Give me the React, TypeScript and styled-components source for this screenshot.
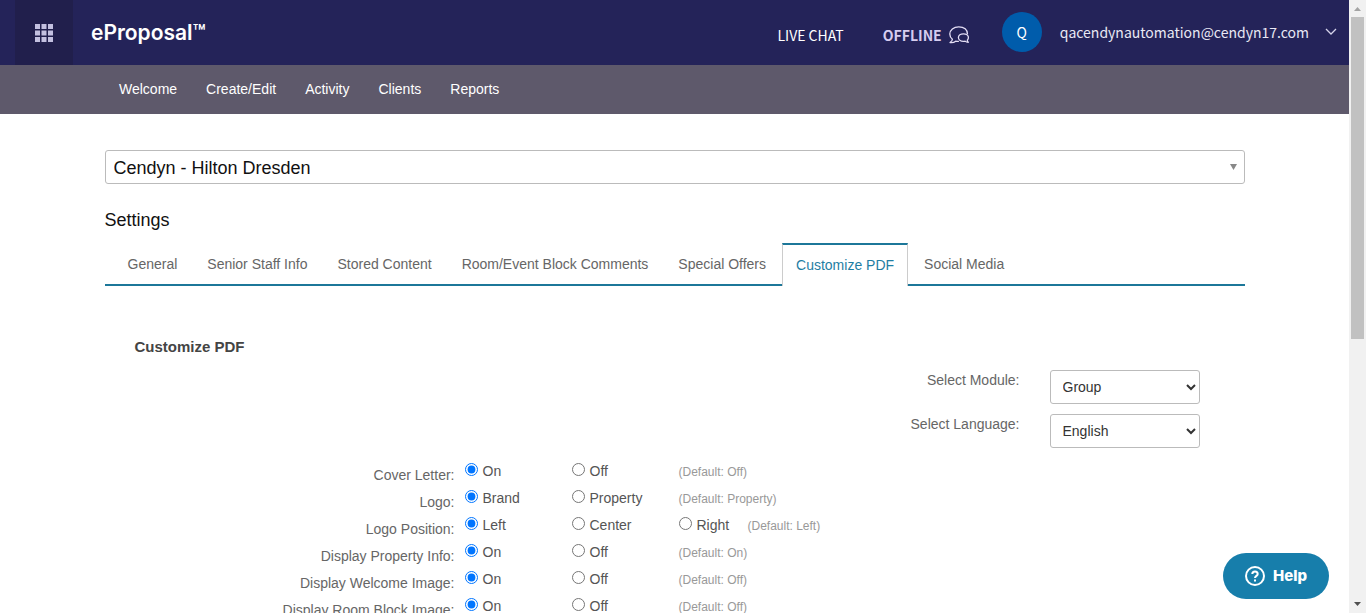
import React, { useId } from "react";
import styled, { createGlobalStyle, css } from "styled-components";

const GlobalStyle = createGlobalStyle`
  *, *::before, *::after { box-sizing: border-box; }
  body {
    margin: 0;
    background: #fff;
    color: #555;
    font: 14px/20px "Liberation Sans", Arial, sans-serif;
  }
`;

const brandFont = `"Noto Sans CJK SC", sans-serif`;

const Shell = styled.div`
  display: flex;
  height: 100vh;
  overflow: hidden;
`;

const Page = styled.div`
  flex: 1;
  min-width: 0;
  overflow: hidden;
`;

const ScrollTrack = styled.div`
  flex: 0 0 17px;
  display: flex;
  flex-direction: column;
  align-items: center;
  background: #f1f1f1;
`;

const ScrollArrow = styled.svg`
  width: 17px;
  height: 17px;
  flex: none;
`;

const ScrollArea = styled.div`
  flex: 1;
  display: grid;
  grid-template-rows: 5fr 4fr;
  width: 13px;
`;

const ScrollThumb = styled.div`
  background: #c1c1c1;
`;

const Header = styled.header`
  display: flex;
  align-items: center;
  height: 65px;
  padding: 0 12px 0 15px;
  background: #242359;
  color: #fff;
  font-family: ${brandFont};
`;

const AppsButton = styled.button`
  display: flex;
  align-items: center;
  justify-content: center;
  width: 58px;
  height: 65px;
  padding: 0;
  border: 0;
  background: #211f4c;
`;

const Brand = styled.a`
  margin-left: 18px;
  color: #fff;
  font: 600 21px/28px Inter, sans-serif;
  text-decoration: none;
`;

const HeaderTools = styled.div`
  display: flex;
  align-items: center;
  margin-left: auto;
`;

const ChatLink = styled.a<{ $strong?: boolean }>`
  display: flex;
  align-items: center;
  gap: 7px;
  margin: 4px 0 0 39px;
  color: ${(p) => (p.$strong ? "#d6cdf0" : "#fff")};
  font-size: 14px;
  font-weight: ${(p) => (p.$strong ? 700 : 400)};
  line-height: 24px;
  text-decoration: none;
`;

const Account = styled.button`
  display: flex;
  align-items: center;
  margin: 0 0 2px 33px;
  padding: 0;
  border: 0;
  background: none;
  color: #e9e8f4;
  font: 14px/24px ${brandFont};
`;

const Avatar = styled.span`
  width: 40px;
  height: 40px;
  margin-right: 18px;
  border-radius: 50%;
  background: #005cab;
  color: #fff;
  line-height: 40px;
  text-align: center;
`;

const Chevron = styled.svg`
  margin-left: 16px;
`;

const MainNav = styled.nav`
  display: flex;
  align-items: center;
  gap: 29px;
  height: 49px;
  padding: 0 119px 2px;
  background: #5e596b;
`;

const NavLink = styled.a`
  color: #fff;
  text-decoration: none;
`;

const Content = styled.main`
  max-width: 1140px;
  margin: 0 auto;
  padding-top: 36px;
`;

const selectBox = css`
  height: 34px;
  border: 1px solid #bbb;
  border-radius: 3px;
  background: #fff;
`;

const PropertyPicker = styled.div`
  position: relative;
`;

const PropertySelect = styled.select`
  ${selectBox}
  display: block;
  width: 100%;
  padding: 2px 8px 0;
  appearance: none;
  color: #111;
  font: 18px/30px "Liberation Sans", Arial, sans-serif;
`;

const PickerArrow = styled.svg`
  position: absolute;
  top: 14px;
  right: 7px;
  pointer-events: none;
`;

const PageTitle = styled.h1`
  margin: 24px 0 11px;
  color: #111;
  font-size: 18px;
  font-weight: 400;
  line-height: 24px;
`;

const TabBar = styled.div`
  display: flex;
  height: 43px;
  padding-left: 8px;
  box-shadow: inset 0 -2px #1c7799;
`;

const Tab = styled.a<{ $active?: boolean }>`
  padding: ${(p) => (p.$active ? "10px 13px" : "11px 15px")};
  color: ${(p) => (p.$active ? "#1f7ea3" : "#666")};
  text-decoration: none;
  white-space: nowrap;
  ${(p) =>
    p.$active &&
    css`
      margin: 0 1px;
      background: #fff;
      border: solid #ccc;
      border-width: 2px 1px 0;
      border-top-color: #1c7799;
    `}
`;

const Panel = styled.section`
  padding-top: 51px;
`;

const PanelTitle = styled.h2`
  margin: 0 0 13px 30px;
  color: #444;
  font-size: 15px;
  font-weight: 700;
  line-height: 20px;
`;

const Filters = styled.div`
  display: grid;
  grid-template-columns: 1fr 150px;
  gap: 10px 30px;
  margin-right: 45px;
`;

const FilterLabel = styled.label`
  color: #666;
  text-align: right;
`;

const FilterSelect = styled.select`
  ${selectBox}
  padding: 0 8px;
  color: #333;
  font: 14px/20px "Liberation Sans", Arial, sans-serif;
`;

const Options = styled.div`
  margin-top: 13px;
`;

const OptionRow = styled.div`
  display: flex;
  align-items: flex-start;
  height: 27px;
`;

const RowLabel = styled.span`
  flex: 0 0 350px;
  margin-right: 10px;
  padding-top: 4px;
  color: #666;
  text-align: right;
`;

const Choice = styled.label<{ $narrow?: boolean }>`
  display: flex;
  gap: 5px;
  flex: 0 0 ${(p) => (p.$narrow ? "69px" : "107px")};
`;

const Radio = styled.input`
  width: 13px;
  height: 13px;
  margin: 2px 0 0;
  accent-color: #0075ff;
`;

const DefaultHint = styled.span`
  padding-top: 1px;
  color: #999;
  font-size: 12px;
`;

const HelpButton = styled.button`
  position: fixed;
  right: 37px;
  bottom: 14px;
  display: flex;
  align-items: center;
  gap: 8px;
  height: 46px;
  padding: 0 22px;
  border: 0;
  border-radius: 23px;
  background: #177eab;
  color: #fff;
  font: 800 15px/24px Inter, sans-serif;
`;

const tabs = [
  "General",
  "Senior Staff Info",
  "Stored Content",
  "Room/Event Block Comments",
  "Special Offers",
  "Customize PDF",
  "Social Media",
];

const settings = [
  { label: "Cover Letter", choices: ["On", "Off"], fallback: "Off" },
  { label: "Logo", choices: ["Brand", "Property"], fallback: "Property" },
  { label: "Logo Position", choices: ["Left", "Center", "Right"], fallback: "Left" },
  { label: "Display Property Info", choices: ["On", "Off"], fallback: "On" },
  { label: "Display Welcome Image", choices: ["On", "Off"], fallback: "Off" },
  { label: "Display Room Block Image", choices: ["On", "Off"], fallback: "Off" },
];

function SettingRow({ label, choices, fallback }: (typeof settings)[number]) {
  const id = useId();
  return (
    <OptionRow role="radiogroup" aria-labelledby={id}>
      <RowLabel id={id}>{label}:</RowLabel>
      {choices.map((choice, i) => (
        <Choice key={choice} $narrow={i === 2}>
          <Radio type="radio" name={label} defaultChecked={i === 0} />
          {choice}
        </Choice>
      ))}
      <DefaultHint>(Default: {fallback})</DefaultHint>
    </OptionRow>
  );
}

function GridIcon() {
  return (
    <svg width="18" height="18" viewBox="0 0 18 18" fill="#c3c0e0">
      {[0, 1, 2].map((r) =>
        [0, 1, 2].map((c) => (
          <rect key={`${r}${c}`} x={c * 6.5} y={r * 6.5} width="5" height="5" />
        ))
      )}
    </svg>
  );
}

function ChatIcon() {
  return (
    <svg width="20" height="18" viewBox="0 0 20 18" fill="none" stroke="#e4def5" strokeWidth="1.3" strokeLinejoin="round">
      <path d="M18.500 8.200C18.700 3.800 15 0.800 9.800 0.800S0.800 4 0.800 8c0 2.200 1 4 2.600 5.300C3.300 14.600 2.400 15.700 1 16.500c2.100 0.300 4.200-0.100 5.700-1.300 1 0.200 2.100 0.300 3.200 0.200" />
      <path d="M14.400 7.800c-2.800 0-5 1.600-5 3.700s2.200 3.800 5 3.800c0.600 0 1.200-0.100 1.700-0.200 0.900 0.900 2 1.200 3.200 1.200-0.700-0.600-1-1.300-1-2.200 0.700-0.700 1.100-1.600 1.100-2.600 0-2.100-2.200-3.700-5-3.700z" />
    </svg>
  );
}

export default function App() {
  return (
    <Shell>
      <GlobalStyle />
      <Page>
        <Header>
          <AppsButton aria-label="Applications">
            <GridIcon />
          </AppsButton>
          <Brand href="#">eProposal™</Brand>
          <HeaderTools>
            <ChatLink href="#">LIVE CHAT</ChatLink>
            <ChatLink href="#" $strong>
              OFFLINE
              <ChatIcon />
            </ChatLink>
            <Account>
              <Avatar>Q</Avatar>
              qacendynautomation@cendyn17.com
              <Chevron width="12" height="8" viewBox="0 0 12 8" fill="none" stroke="#d5d3ea" strokeWidth="1.3">
                <path d="M1 1l5 5 5-5" />
              </Chevron>
            </Account>
          </HeaderTools>
        </Header>
        <MainNav>
          {["Welcome", "Create/Edit", "Activity", "Clients", "Reports"].map((item) => (
            <NavLink key={item} href="#">
              {item}
            </NavLink>
          ))}
        </MainNav>
        <Content>
          <PropertyPicker>
            <PropertySelect aria-label="Property">
              <option>Cendyn - Hilton Dresden</option>
            </PropertySelect>
            <PickerArrow width="9" height="6" viewBox="0 0 9 6" fill="#888">
              <path d="M1 0h7L4.500 6z" />
            </PickerArrow>
          </PropertyPicker>
          <PageTitle>Settings</PageTitle>
          <TabBar>
            {tabs.map((tab) => (
              <Tab key={tab} href="#" $active={tab === "Customize PDF"}>
                {tab}
              </Tab>
            ))}
          </TabBar>
          <Panel>
            <PanelTitle>Customize PDF</PanelTitle>
            <Filters>
              <FilterLabel htmlFor="module">Select Module:</FilterLabel>
              <FilterSelect id="module">
                <option>Group</option>
              </FilterSelect>
              <FilterLabel htmlFor="language">Select Language:</FilterLabel>
              <FilterSelect id="language">
                <option>English</option>
              </FilterSelect>
            </Filters>
            <Options>
              {settings.map((setting) => (
                <SettingRow key={setting.label} {...setting} />
              ))}
            </Options>
          </Panel>
        </Content>
      </Page>
      <ScrollTrack aria-hidden="true">
        <ScrollArrow viewBox="0 0 17 17" fill="#a3a3a3">
          <path d="M5 11h7L8.500 7z" />
        </ScrollArrow>
        <ScrollArea>
          <ScrollThumb />
        </ScrollArea>
        <ScrollArrow viewBox="0 0 17 17" fill="#505050">
          <path d="M5 6h7L8.500 10z" />
        </ScrollArrow>
      </ScrollTrack>
      <HelpButton>
        <svg width="20" height="20" viewBox="0 0 20 20" fill="none" stroke="#fff" strokeWidth="2">
          <circle cx="10" cy="10" r="9" />
          <path d="M7.300 8c0-1.600 1.200-2.600 2.700-2.600s2.700 1 2.700 2.500c0 1.900-2.700 2.100-2.700 4.200" />
          <path d="M10 13.400v2" />
        </svg>
        Help
      </HelpButton>
    </Shell>
  );
}
